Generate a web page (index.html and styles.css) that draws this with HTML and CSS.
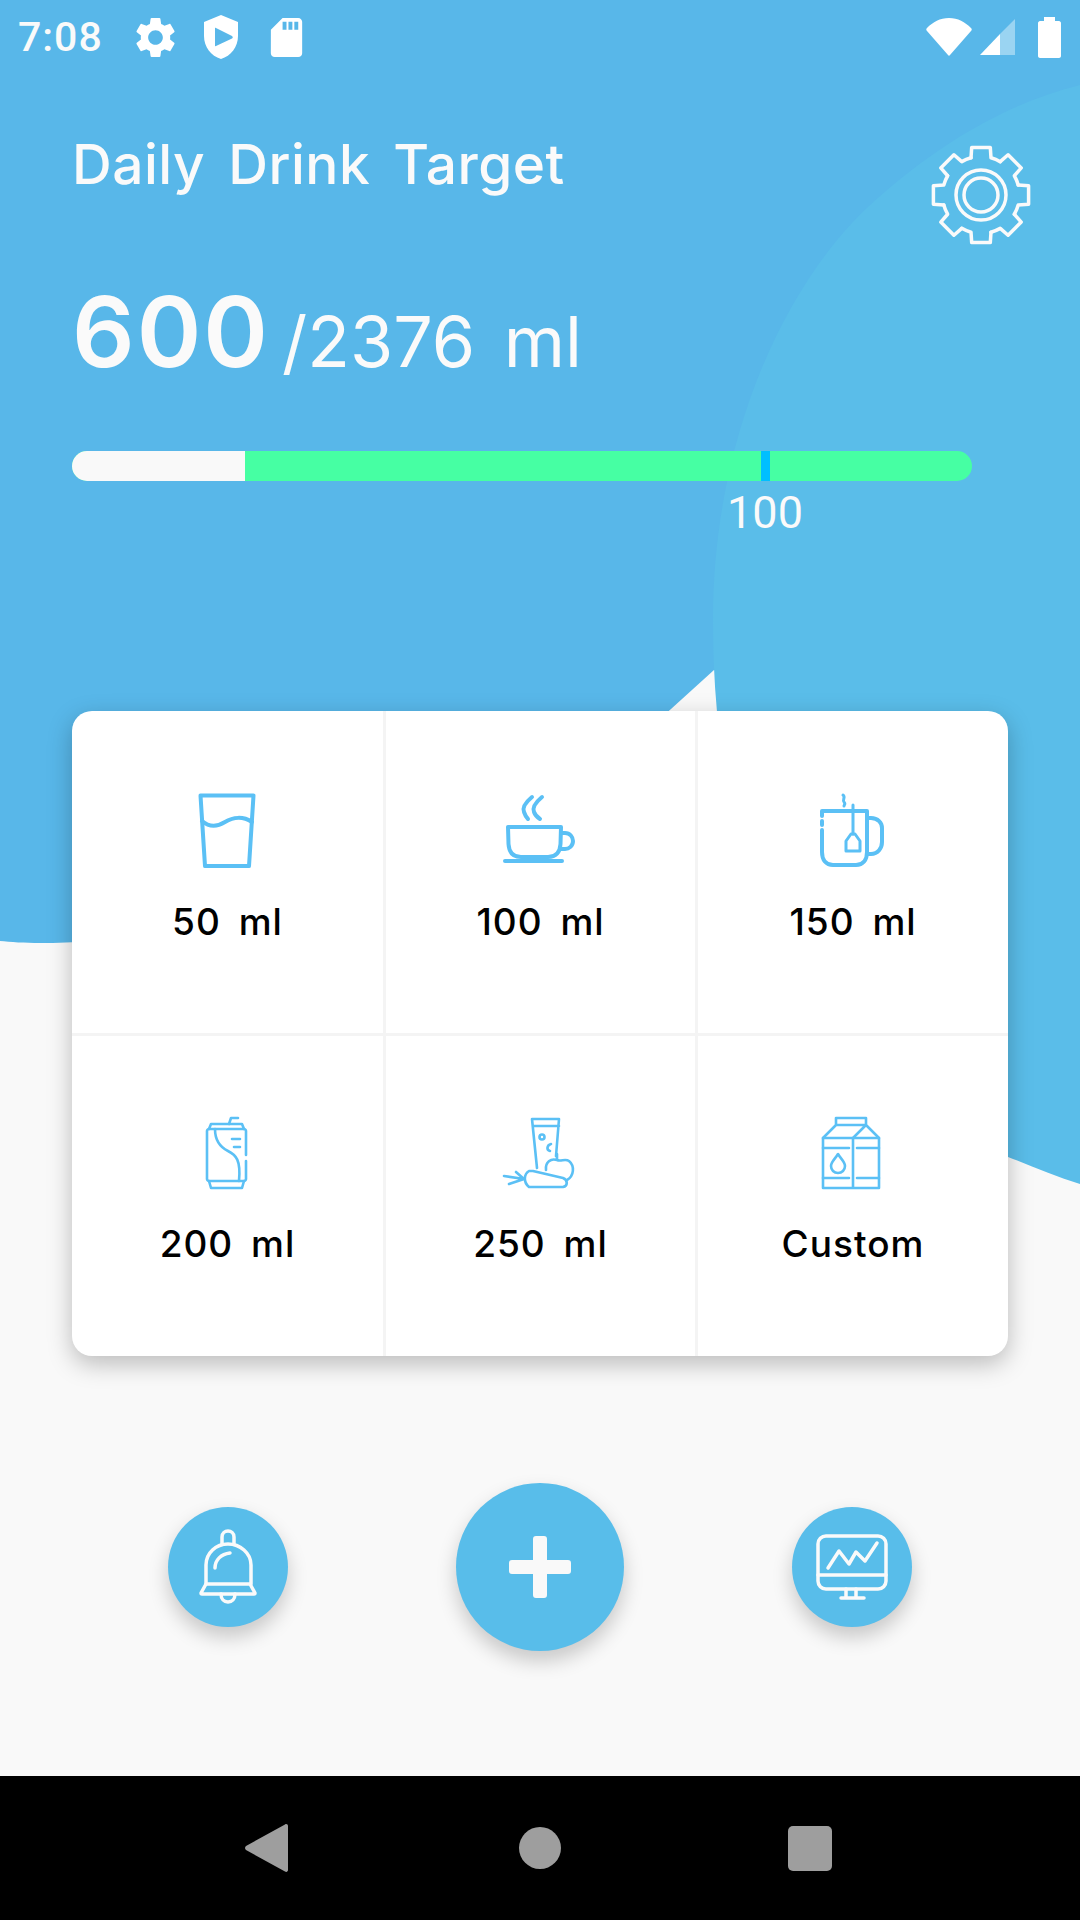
FILE: index.html
```html
<!DOCTYPE html>
<html lang="en">
<head>
    <meta charset="UTF-8">
    <meta name="viewport" content="width=device-width, initial-scale=1.0">
    <title>Daily Drink Target</title>
    <link rel="stylesheet" href="styles.css">
</head>
<body>
    <div class="app">
        <!-- Background shapes -->
        <svg class="bg-shapes" viewBox="0 0 1080 1920" width="1080" height="1920">
            <path class="shape-main" d="M0 0H1080V700L714 670L671 709C520 850 250 943 40 943C25 943 10 942 0 941Z"/>
            <path class="shape-light" d="M1080 85C1000 105 930 150 868 207C790 280 713 430 713 620C713 650 714 680 717 712C740 950 880 1110 1008 1157C1032 1166 1056 1177 1080 1184Z"/>
        </svg>

        <!-- Status bar -->
        <div class="status">
            <div class="status-left">
                <span class="clock">7:08</span>
                <svg class="st-gear" viewBox="0 0 24 24" width="49" height="49"><path d="M19.14 12.94c.04-.3.06-.61.06-.94 0-.32-.02-.64-.07-.94l2.03-1.58c.18-.14.23-.41.12-.61l-1.92-3.32c-.12-.22-.37-.29-.59-.22l-2.39.96c-.5-.38-1.03-.7-1.62-.94l-.36-2.54c-.04-.24-.24-.41-.48-.41h-3.84c-.24 0-.43.17-.47.41l-.36 2.54c-.59.24-1.13.57-1.62.94l-2.39-.96c-.22-.08-.47 0-.59.22L2.74 8.87c-.12.21-.08.47.12.61l2.03 1.58c-.05.3-.09.63-.09.94s.02.64.07.94l-2.03 1.58c-.18.14-.23.41-.12.61l1.92 3.32c.12.22.37.29.59.22l2.39-.96c.5.38 1.03.7 1.62.94l.36 2.54c.05.24.24.41.48.41h3.84c.24 0 .44-.17.47-.41l.36-2.54c.59-.24 1.13-.56 1.62-.94l2.39.96c.22.08.47 0 .59-.22l1.92-3.32c.12-.22.07-.47-.12-.61l-2.01-1.58zM12 15.6c-1.98 0-3.6-1.62-3.6-3.6s1.62-3.6 3.6-3.6 3.6 1.62 3.6 3.6-1.62 3.6-3.6 3.6z"/></svg>
                <svg class="st-shield" viewBox="0 0 34 44" width="34" height="44"><path fill-rule="evenodd" d="M17 0L0 7V21C0 32 7 41 17 44C27 41 34 32 34 21V7ZM12 13L28 21C29 22 29 23 28 23.500L12 31C11 31.500 11 31 11 30V14C11 13 11 12.500 12 13Z"/></svg>
                <svg class="st-sd" viewBox="0 0 24 24" width="47" height="47"><path d="M18 2h-8L4.020 8 4 20c0 1.100.9 2 2 2h12c1.100 0 2-.9 2-2V4c0-1.100-.9-2-2-2zm-6 6h-2V4h2v4zm3 0h-2V4h2v4zm3 0h-2V4h2v4z"/></svg>
            </div>
            <div class="status-right">
                <svg viewBox="0 0 46 38" width="46" height="38"><path d="M1 10C7 4 14 0 23 0C32 0 39 4 45 10C46 11 46 12 45 13L24 37C23.500 38 22.500 38 22 37L1 13C0 12 0 11 1 10Z"/></svg>
                <svg viewBox="0 0 35 36" width="35" height="36"><path class="dim" d="M35 0V36H20V15Z"/><path d="M20 15V36H0Z"/></svg>
                <svg viewBox="0 0 23 41" width="23" height="41"><path d="M6 0H17V4H21C22 4 23 5 23 6V39C23 40 22 41 21 41H2C1 41 0 40 0 39V6C0 5 1 4 2 4H6Z"/></svg>
            </div>
        </div>

        <!-- Title row -->
        <div class="head">
            <h1>Daily Drink Target</h1>
            <svg class="settings" viewBox="0 0 104 104" width="104" height="104">
                <defs>
                    <path id="tooth" d="M-10-37.200L-9.300-47.600H9.300L10-37.200A38.500 38.500 0 0 1 19.250-33.340"/>
                </defs>
                <g transform="translate(52 52)">
                    <use href="#tooth"/>
                    <use href="#tooth" transform="rotate(45)"/>
                    <use href="#tooth" transform="rotate(90)"/>
                    <use href="#tooth" transform="rotate(135)"/>
                    <use href="#tooth" transform="rotate(180)"/>
                    <use href="#tooth" transform="rotate(225)"/>
                    <use href="#tooth" transform="rotate(270)"/>
                    <use href="#tooth" transform="rotate(315)"/>
                    <circle r="25"/>
                    <circle r="17"/>
                </g>
            </svg>
        </div>

        <div class="total"><span class="total-now">600</span><span class="total-goal">/2376 ml</span></div>

        <!-- Progress -->
        <div class="progress">
            <div class="progress-done"></div>
            <div class="progress-tick" style="left: 76.5%"><span>100</span></div>
        </div>

        <!-- Drink sizes -->
        <div class="card">
            <div class="cell">
                <svg class="drink" viewBox="0 0 80 76" width="80" height="76">
                    <path class="thick" d="M12.500 3.500H65.500L61 74H17Z"/>
                    <path class="thick" d="M14 29C21 35 29 35 37 30S55 24 64 30"/>
                </svg>
                <span class="label">50 ml</span>
            </div>
            <div class="cell">
                <svg class="drink" viewBox="0 0 80 76" width="80" height="76">
                    <path class="thick" d="M4 69H61"/>
                    <path class="thick" d="M7 35H60L59.500 52C59 60 55 65 47 65H20C12 65 8 60 7.500 52Z"/>
                    <path class="thick" d="M60 41H64C69 41 72 45 72 49C72 54 68 57 64 57H59"/>
                    <path class="thick" d="M31 5C25 10 21 15 23 20C24 23 25 25 27 27"/>
                    <path class="thick" d="M41 5C35 10 31 15 33 20C34 23 36 25 39 27"/>
                </svg>
                <span class="label">100 ml</span>
            </div>
            <div class="cell">
                <svg class="drink" viewBox="0 0 80 76" width="80" height="76">
                    <path class="thick" d="M9 24V19H54V60C54 68 50 73 43 73H20C13 73 9 68 9 60V38"/>
                    <path class="thick" d="M9 29V33"/>
                    <path class="mid" d="M40 13V42"/>
                    <path class="mid" d="M33 59V49L38 42H42L47 49V59Z"/>
                    <path class="thick" d="M54 26H58C65 26 69 31 69 36V50C69 56 65 62 58 62H54"/>
                    <path class="mid" d="M30 3C33 5 29 8 31 10C33 12 31 13 31 14"/>
                </svg>
                <span class="label">150 ml</span>
            </div>
            <div class="cell">
                <svg class="drink" viewBox="0 0 80 76" width="80" height="76">
                    <path class="thin" d="M21 15L23 10H54L56 15"/>
                    <path class="thin" d="M58 41V17C58 16 57 15 56 15H21C20 15 19 16 19 17V65C19 66 20 67 21 67H56C57 67 58 66 58 65V47"/>
                    <path class="thin" d="M21 67L23 74H54L56 67"/>
                    <path class="thin" d="M41 10L43 4H50"/>
                    <path class="thin" d="M27 15C27 26 32 33 40 37C48 41 53 46 51 67"/>
                    <path class="thin" d="M44 25H52M46 33H52"/>
                </svg>
                <span class="label">200 ml</span>
            </div>
            <div class="cell">
                <svg class="drink" viewBox="0 0 80 76" width="80" height="76">
                    <path class="thin" d="M31 5H58L55 42M36 54L31 5M32 12H58"/>
                    <circle class="thin" cx="41" cy="23" r="2.500"/>
                    <path class="thin" d="M50 30C46 31 45 36 49 37"/>
                    <path class="thin" d="M28 57C23 60 22 68 28 73H62C67 72 67 66 62 64L32 57Z"/>
                    <path class="thin" d="M3 62L23 65M15 58L23 65M8 70L23 65"/>
                    <path class="thin" d="M45 56C44 48 50 44 56 46C60 48 64 44 68 47C74 52 73 62 66 66M56 40V46"/>
                </svg>
                <span class="label">250 ml</span>
            </div>
            <div class="cell">
                <svg class="drink" viewBox="0 0 80 76" width="80" height="76">
                    <path class="thin" d="M10 24H66V74H10ZM40 24V74"/>
                    <path class="thin" d="M23 11V4H53V11H23L10 24M53 11L40 24M53 11L66 24"/>
                    <path class="thin" d="M10 34H36M44 34H66M10 64H36M44 64H66"/>
                    <path class="thin" d="M25 40C22 45 18 48 18 52C18 56 21 59 25 59C29 59 32 56 32 52C32 48 28 45 25 40Z"/>
                </svg>
                <span class="label">Custom</span>
            </div>
        </div>

        <!-- Round actions -->
        <div class="actions">
            <button class="round">
                <svg class="white-line" viewBox="0 0 72 80" width="72" height="80">
                    <path d="M14 57V38C14 26 24 17 36 17C48 17 59 26 59 38V57"/>
                    <path d="M14 57H58L63 66C63 67 63 67 62 67H10C9 67 9 67 9 66Z"/>
                    <path d="M30 17V10C30 6 33 4 36 4C39 4 42 6 42 10V17"/>
                    <path d="M29 67C29 72 32 75 36 75C40 75 43 72 43 67"/>
                    <path d="M23 41C23 33 29 27 38 26"/>
                </svg>
            </button>
            <button class="round round-big">
                <svg class="plus" viewBox="0 0 64 64" width="64" height="64"><path d="M25 4C25 2 26 1 28 1H36C38 1 39 2 39 4V25H60C62 25 63 26 63 28V36C63 38 62 39 60 39H39V60C39 62 38 63 36 63H28C26 63 25 62 25 60V39H4C2 39 1 38 1 36V28C1 26 2 25 4 25H25Z"/></svg>
            </button>
            <button class="round">
                <svg class="white-line" viewBox="0 0 72 80" width="72" height="80">
                    <rect x="2" y="9" width="68" height="53" rx="8"/>
                    <path d="M2 48H70"/>
                    <path d="M12 41L23 24L33 37L40 25L49 34L61 16"/>
                    <path d="M30 62V71M40 62V71M25 71H48"/>
                </svg>
            </button>
        </div>

        <!-- Navigation bar -->
        <div class="nav">
            <svg viewBox="0 0 43 48" width="43" height="48"><path d="M40 0.500C41.500 -0.500 43 0.500 43 2V46C43 47.500 41.500 48.500 40 47.500L1 26C-0.300 25 -0.300 23 1 22Z"/></svg>
            <div class="nav-home"></div>
            <div class="nav-recent"></div>
        </div>
    </div>
</body>
</html>
```

FILE: styles.css
```css
body {
    margin: 0;
    font-family: "Inter", "Noto Sans", sans-serif;
    background: #f9f9f9;
}

.app {
    position: relative;
    display: flex;
    flex-direction: column;
    width: 1080px;
    height: 1920px;
    overflow: hidden;
    background: #f9f9f9;
}

/* Background shapes */
.bg-shapes {
    position: absolute;
    top: 0;
    left: 0;
}

.shape-main {
    fill: #58b7e9;
}

.shape-light {
    fill: #5abde9;
}

.status,
.head,
.total,
.progress,
.card,
.actions,
.nav {
    position: relative;
}

/* Status bar */
.status {
    display: flex;
    justify-content: space-between;
    align-items: center;
    height: 74px;
    padding: 0 19px 0 18px;
    fill: #fff;
}

.status-left,
.status-right {
    display: flex;
    align-items: center;
}

.clock {
    width: 88px;
    font-family: "Roboto", sans-serif;
    font-size: 41px;
    font-weight: 500;
    letter-spacing: 1px;
    color: #fafafa;
}

.st-gear {
    margin-left: 25px;
}

.st-shield {
    margin-left: 24px;
}

.st-sd {
    margin-left: 25px;
}

.status-right {
    gap: 8px;
}

.status-right svg:last-child {
    margin-left: 15px;
}

.dim {
    opacity: 0.4;
}

/* Title row */
.head {
    display: flex;
    justify-content: space-between;
    align-items: flex-start;
    padding: 50px 47px 0 72px;
}

h1 {
    margin: 0;
    font-size: 55px;
    font-weight: 500;
    line-height: 80px;
    letter-spacing: 0.5px;
    word-spacing: 8px;
    color: #fafafa;
}

.settings {
    margin-top: 19px;
    fill: none;
    stroke: #fafafa;
    stroke-width: 3.5;
    stroke-linejoin: round;
    stroke-linecap: round;
}

/* 600 / 2376 ml */
.total {
    display: flex;
    align-items: baseline;
    margin-top: 33px;
    padding-left: 72px;
    color: #fafafa;
}

.total-now {
    font-size: 98px;
    font-weight: 600;
    line-height: 104px;
    letter-spacing: 2px;
}

.total-goal {
    margin-left: 12px;
    font-size: 70px;
    font-weight: 400;
    word-spacing: 9px;
}

/* Progress */
.progress {
    margin: 67px 108px 0 72px;
    height: 30px;
    border-radius: 15px;
    background: #46ffa3;
}

.progress-done {
    width: 173px;
    height: 100%;
    border-radius: 15px 0 0 15px;
    background: #f9f9f9;
}

.progress-tick {
    position: absolute;
    top: 0;
    width: 9px;
    height: 100%;
    background: #00bfff;
}

.progress-tick span {
    position: absolute;
    top: 37px;
    left: -38px;
    width: 85px;
    text-align: center;
    font-family: "Roboto", sans-serif;
    font-size: 45px;
    font-weight: 400;
    line-height: 50px;
    color: #fafafa;
}

/* Drink sizes */
.card {
    display: grid;
    grid-template-columns: 314px 312px 310px;
    grid-template-rows: 325px 320px;
    margin: 230px 72px 0;
    border-radius: 20px;
    background: #fff;
    box-shadow: 0 8px 24px rgba(0, 0, 0, 0.25);
}

.cell {
    display: flex;
    flex-direction: column;
    align-items: center;
    padding-top: 81px;
    box-sizing: border-box;
    border-right: 3px solid #f4f4f4;
    border-bottom: 3px solid #f4f4f4;
}

.cell:nth-child(3n) {
    border-right: none;
}

.cell:nth-child(n+4) {
    padding-top: 78px;
    border-bottom: none;
}

.drink {
    fill: none;
    stroke: #5bc0f5;
    stroke-linejoin: round;
    stroke-linecap: round;
}

.thick {
    stroke-width: 4;
}

.mid {
    stroke-width: 3;
}

.thin {
    stroke-width: 2.6;
}

.label {
    margin-top: 32px;
    font-size: 37px;
    font-weight: 500;
    line-height: 44px;
    letter-spacing: 1px;
    word-spacing: 7px;
    color: #000;
}

/* Round actions */
.actions {
    display: flex;
    justify-content: space-between;
    align-items: center;
    height: 168px;
    margin-top: 127px;
    padding: 0 168px;
}

.round {
    display: flex;
    justify-content: center;
    align-items: center;
    width: 120px;
    height: 120px;
    padding: 0;
    border: none;
    border-radius: 50%;
    background: #58bdea;
    box-shadow: 0 10px 20px rgba(0, 0, 0, 0.2);
}

.round-big {
    width: 168px;
    height: 168px;
}

.white-line {
    fill: none;
    stroke: #fafafa;
    stroke-width: 3.5;
    stroke-linejoin: round;
    stroke-linecap: round;
}

.plus {
    fill: #f9f9f9;
}

/* Navigation bar */
.nav {
    display: flex;
    justify-content: center;
    align-items: center;
    height: 144px;
    margin-top: auto;
    padding-right: 3px;
    background: #000;
    fill: #9e9e9e;
}

.nav-home {
    width: 42px;
    height: 42px;
    margin: 0 227px 0 231px;
    border-radius: 50%;
    background: #9e9e9e;
}

.nav-recent {
    width: 44px;
    height: 45px;
    border-radius: 5px;
    background: #9e9e9e;
}
```
